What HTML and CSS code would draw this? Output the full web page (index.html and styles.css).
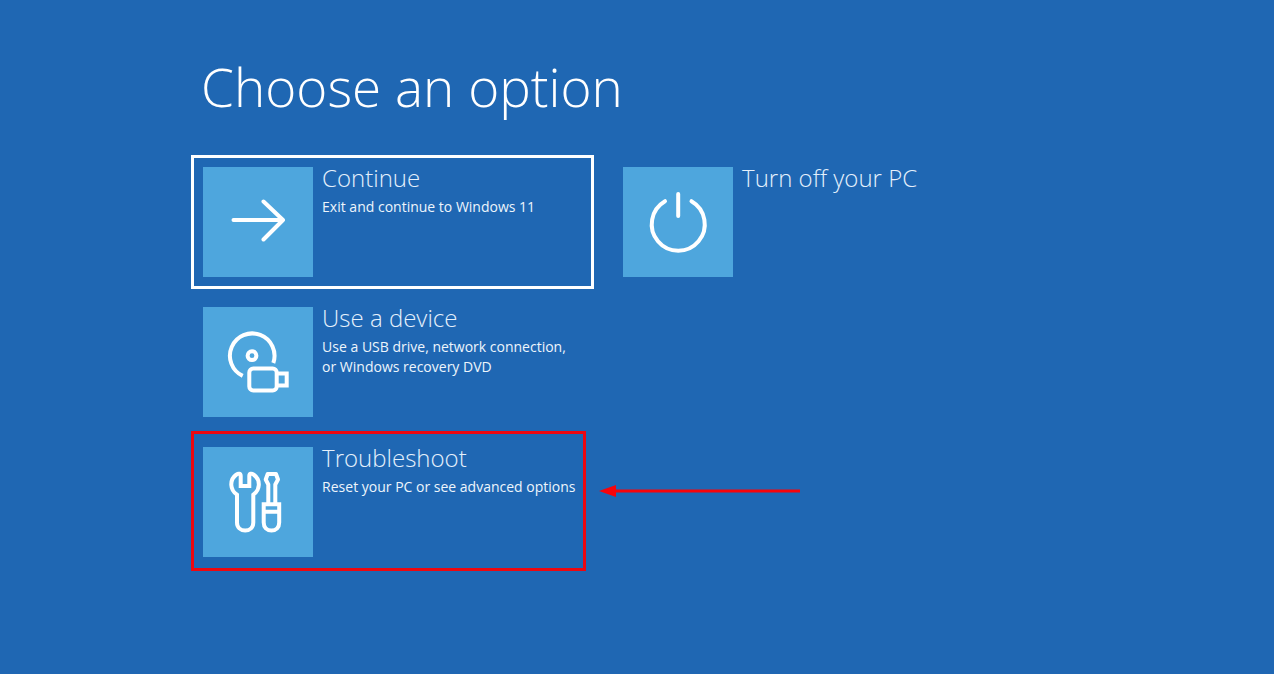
FILE: index.html
```html
<!DOCTYPE html>
<html lang="en">
<head>
    <meta charset="UTF-8">
    <meta name="viewport" content="width=device-width, initial-scale=1.0">
    <title>Choose an option</title>
    <link rel="stylesheet" href="styles.css">
</head>
<body>
    <main class="container">
        <h1 class="title">Choose an option</h1>

        <div class="options">
            <div class="column">
                <button type="button" class="option option-selected">
                    <span class="tile">
                        <svg class="icon" viewBox="0 0 110 110" aria-hidden="true">
                            <path d="M30.5 53H80M60.5 34.5L80 53L60.5 72.5"/>
                        </svg>
                    </span>
                    <span class="text">
                        <span class="name">Continue</span>
                        <span class="desc">Exit and continue to Windows 11</span>
                    </span>
                </button>

                <button type="button" class="option">
                    <span class="tile">
                        <svg class="icon" viewBox="0 0 110 110" aria-hidden="true">
                            <path class="butt" d="M39.7 68.9A22.3 22.3 0 1 1 70.3 56"/>
                            <circle cx="49" cy="48.7" r="4.4"/>
                            <rect x="46.3" y="61.5" width="27.4" height="22" rx="4"/>
                            <path class="miter" d="M74 66.5H83.7V78.5H74"/>
                        </svg>
                    </span>
                    <span class="text">
                        <span class="name">Use a device</span>
                        <span class="desc">Use a USB drive, network connection,<br>or Windows recovery DVD</span>
                    </span>
                </button>

                <div class="marked">
                    <button type="button" class="option">
                        <span class="tile">
                            <svg class="icon" viewBox="0 0 110 110" aria-hidden="true">
                                <path class="miter" d="M37.7 39H46.3V29C46.3 26.5 48.5 26 50.5 27.5C54 30 56 34 55.8 38C55.6 42 53.5 45.5 50.3 47.7V75.5C50.3 80.5 47 83.5 42.2 83.5S34 80.5 34 75.5V47.7C30.8 45.5 28.5 42 28.3 38C28.1 34 30 30 33.5 27.5C35.5 26 37.7 26.5 37.7 29Z"/>
                                <path d="M65.3 57V37.5L62.7 32.5L64.7 27H73L75 32.5L72.3 37.5V57"/>
                                <path class="miter" d="M60.7 57.3H76.2V75.5C76.2 80.5 73.2 83.5 68.5 83.5S60.7 80.5 60.7 75.5ZM60.7 64.7H76.2"/>
                            </svg>
                        </span>
                        <span class="text">
                            <span class="name">Troubleshoot</span>
                            <span class="desc">Reset your PC or see advanced options</span>
                        </span>
                    </button>
                    <svg class="pointer" viewBox="0 0 202 14" aria-hidden="true">
                        <path d="M0 7L17 1V5.5H201V8.5H17V13Z"/>
                    </svg>
                </div>
            </div>

            <div class="column">
                <button type="button" class="option">
                    <span class="tile">
                        <svg class="icon" viewBox="0 0 110 110" aria-hidden="true">
                            <path d="M55.2 27V49"/>
                            <path d="M42 34.2A26.5 26.5 0 1 0 68.5 34.2"/>
                        </svg>
                    </span>
                    <span class="text">
                        <span class="name">Turn off your PC</span>
                    </span>
                </button>
            </div>
        </div>
    </main>
</body>
</html>
```
FILE: styles.css
```css
* {
    margin: 0;
    padding: 0;
    box-sizing: border-box;
}

body {
    background: #1f67b3;
    color: #fff;
    font-family: 'Open Sans', 'Noto Sans', sans-serif;
    min-height: 100vh;
}

.container {
    padding: 47px 15%;
}

.title {
    padding-left: 10px;
    margin-bottom: 28px;
    font-size: 53px;
    font-weight: 300;
    line-height: 80px;
}

.options {
    display: grid;
    grid-template-columns: repeat(2, minmax(0, 403px));
    gap: 17px;
}

.column {
    display: flex;
    flex-direction: column;
    gap: 6px;
}

.option {
    display: flex;
    align-items: flex-start;
    gap: 9px;
    width: 100%;
    padding: 9px;
    border: 3px solid transparent;
    background: none;
    color: inherit;
    font-family: inherit;
    text-align: left;
    cursor: pointer;
}

.option:hover,
.option-selected {
    border-color: #fff;
}

.tile {
    flex: none;
    width: 110px;
    height: 110px;
    background: #4ea6dd;
}

.icon {
    display: block;
    width: 100%;
    fill: none;
    stroke: #fff;
    stroke-width: 4;
    stroke-linecap: round;
    stroke-linejoin: round;
}

.butt {
    stroke-linecap: butt;
}

.miter {
    stroke-linejoin: miter;
}

.name,
.desc {
    display: block;
    white-space: nowrap;
}

.name {
    margin-top: -7px;
    margin-bottom: 1px;
    font-size: 24px;
    font-weight: 300;
    line-height: 36px;
    color: #e4f0fc;
}

.desc {
    font-size: 14px;
    line-height: 20px;
    color: #edf5fc;
}

/* highlighted option with its arrow */
.marked {
    position: relative;
}

.marked::after {
    content: '';
    position: absolute;
    inset: -4px 8px -2px 0;
    border: 3px solid #ee0710;
    pointer-events: none;
}

.pointer {
    position: absolute;
    top: 49px;
    left: 408px;
    width: 202px;
    fill: #f8040a;
}
```
